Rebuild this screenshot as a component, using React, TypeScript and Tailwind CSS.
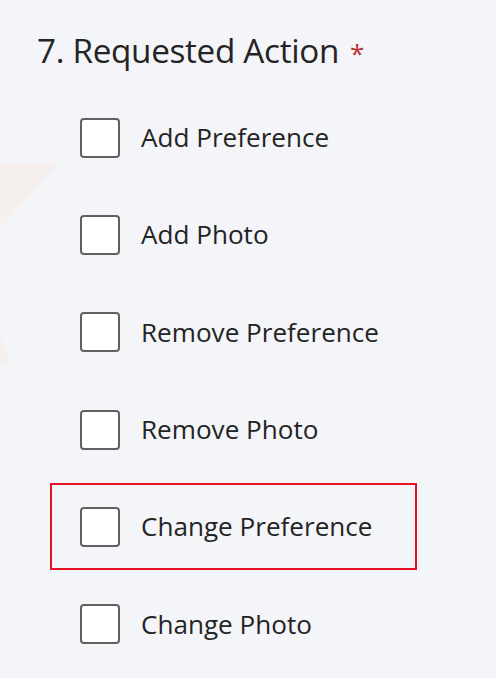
const options = [
  "Add Preference",
  "Add Photo",
  "Remove Preference",
  "Remove Photo",
  "Change Preference",
  "Change Photo",
];

function Box() {
  return (
    <span className="block w-[40px] h-[40px] shrink-0 rounded-[4px] border-2 border-[#616161] bg-white" />
  );
}

export default function App() {
  return (
    <div
      className="relative w-[496px] h-[678px] overflow-hidden bg-[#f3f5f8] text-[#242424]"
      style={{ fontFamily: '"Open Sans", "Noto Sans", sans-serif' }}
    >
      {/* faint logo watermark behind the form */}
      <svg className="absolute left-0 top-0" width="80" height="380" viewBox="0 0 80 380">
        <polygon points="0,162 60,162 0,228" fill="#f5efee" />
        <polygon points="0,335 11,363 0,363" fill="#f5efee" />
      </svg>

      <div className="relative flex flex-col">
        <div className="flex items-baseline pl-[37px] pt-[30px] h-[89px]">
          <span className="text-[33.3px] leading-[40px] font-[370] tracking-[-0.01em]">7. Requested Action</span>
          <span className="ml-[11px] text-[26px] text-[#b8312f]">*</span>
        </div>

        {options.map((label, i) =>
          i === 4 ? (
            <div key={label} className="h-[97.3px] flex items-center">
              <div className="ml-[50px] w-[367px] h-[87px] border-2 border-[#e81123] flex items-center pl-[28px]">
                <Box />
                <span className="ml-[21px] text-[26.1px] font-[370]">{label}</span>
              </div>
            </div>
          ) : (
            <div key={label} className="h-[97.3px] flex items-center pl-[80px]">
              <Box />
              <span className="ml-[21px] text-[26.1px] font-[370]">{label}</span>
            </div>
          )
        )}
      </div>
    </div>
  );
}
